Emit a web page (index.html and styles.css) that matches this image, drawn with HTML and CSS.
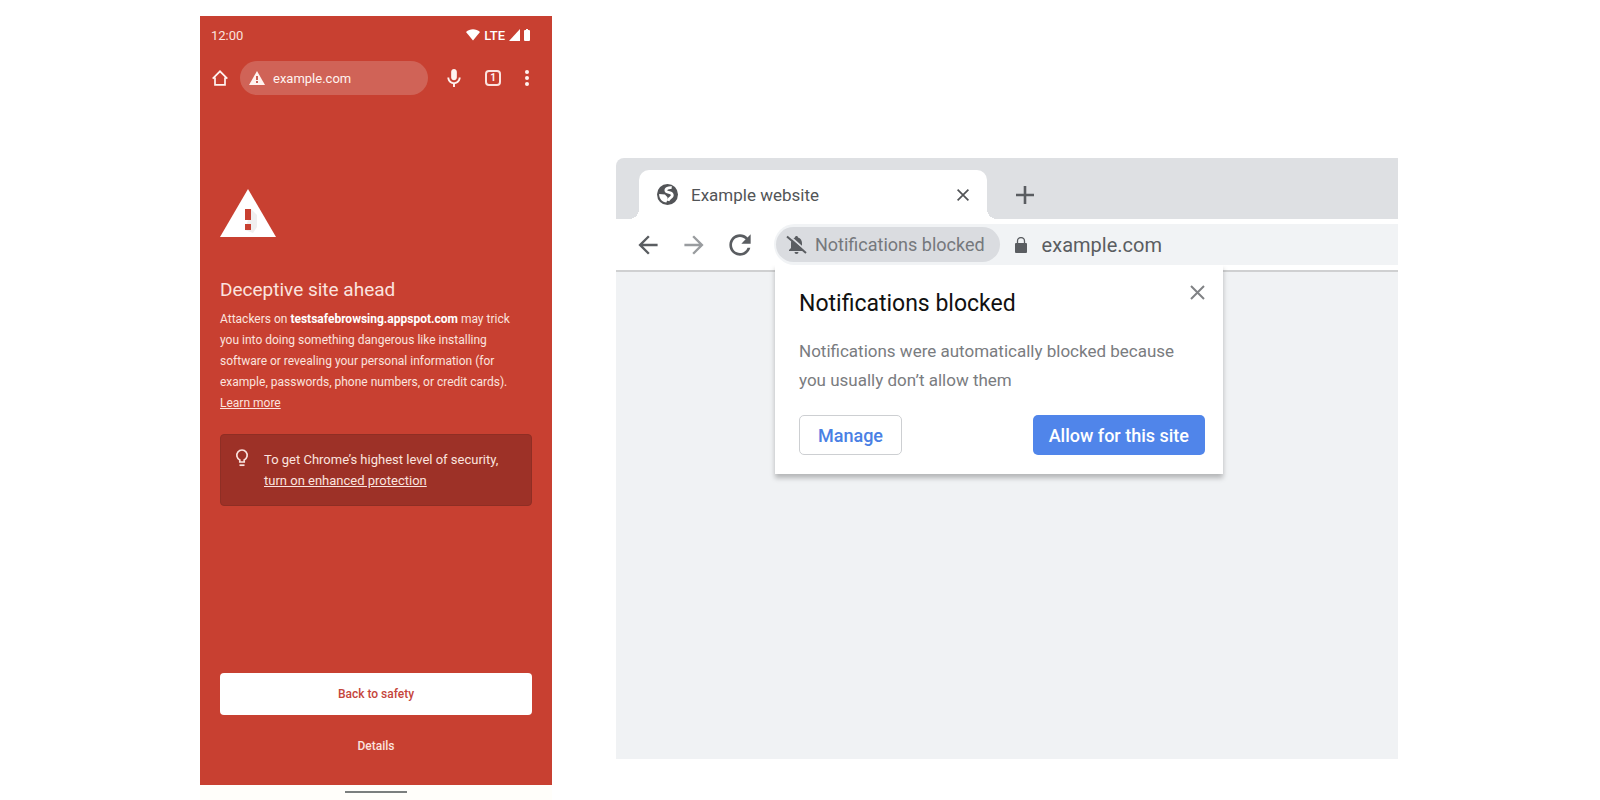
FILE: index.html
```html
<!DOCTYPE html>
<html lang="en">
<head>
    <meta charset="UTF-8">
    <meta name="viewport" content="width=device-width, initial-scale=1.0">
    <title>Example website</title>
    <link rel="stylesheet" href="styles.css">
</head>
<body>

<main class="stage">
    <!-- Phone -->
    <section class="phone">
        <div class="screen">
            <div class="status-bar">
                <span class="clock">12:00</span>
                <div class="status-icons">
                    <svg width="14" height="12" viewBox="0 0 14 12"><path d="M0 3C4-.6 10-.6 14 3L7 11.500z" fill="currentColor"/></svg>
                    <span>LTE</span>
                    <svg width="11" height="12" viewBox="0 0 11 12"><path d="M11 0v12H0z" fill="currentColor"/></svg>
                    <svg width="6" height="12" viewBox="0 0 6 12"><path d="M2 0h2v1h1a1 1 0 0 1 1 1v9a1 1 0 0 1-1 1H1a1 1 0 0 1-1-1V2a1 1 0 0 1 1-1h1z" fill="currentColor"/></svg>
                </div>
            </div>

            <div class="phone-toolbar">
                <button class="icon-button" aria-label="Home">
                    <svg width="16" height="16" viewBox="0 0 16 16"><path d="M.7 8.700 8 1.300l7.300 7.400M3 7.500V14.800H13V7.500" fill="none" stroke="currentColor" stroke-width="1.700"/></svg>
                </button>
                <div class="phone-url">
                    <svg width="16" height="14" viewBox="0 0 16 14"><path d="M8 0l8 14H0z" fill="currentColor"/><path d="M8 5v4M8 10v2" stroke="#cc5f54" stroke-width="2"/></svg>
                    <input type="text" aria-label="Address" value="example.com">
                </div>
                <button class="icon-button" aria-label="Voice search">
                    <svg width="14" height="18" viewBox="5 2 14 19"><path d="M12 14c1.660 0 3-1.340 3-3V5c0-1.660-1.340-3-3-3S9 3.340 9 5v6c0 1.660 1.340 3 3 3zM17 11c0 2.760-2.240 5-5 5s-5-2.240-5-5H5c0 3.530 2.610 6.430 6 6.920V21h2v-3.080c3.390-.490 6-3.390 6-6.920h-2z" fill="currentColor"/></svg>
                </button>
                <button class="tab-count" aria-label="Open tabs">1</button>
                <button class="icon-button" aria-label="Menu">
                    <svg width="4" height="16" viewBox="0 0 4 16"><g fill="currentColor"><circle cx="2" cy="2" r="2"/><circle cx="2" cy="8" r="2"/><circle cx="2" cy="14" r="2"/></g></svg>
                </button>
            </div>

            <div class="warning">
                <svg class="warning-icon" width="56" height="48" viewBox="0 0 56 48">
                    <path d="M28 0l28 48H0z" fill="#fff"/>
                    <path d="M31 20l6 6v12l-4 6-8-3z" fill="#f0efef"/>
                    <path d="M25 20h6v11h-6zM25 35h6v6h-6z" fill="#c84031"/>
                </svg>
                <h1>Deceptive site ahead</h1>
                <p>Attackers on <strong>testsafebrowsing.appspot.com</strong> may trick you into doing something dangerous like installing software or revealing your personal information (for example, passwords, phone numbers, or credit cards). <a href="#">Learn more</a></p>
                <div class="tip">
                    <svg width="14" height="18" viewBox="0 0 14 18"><path d="M4.800 13V10.900A5.200 5.200 0 1 1 9.200 10.900V13z" fill="none" stroke="currentColor" stroke-width="1.700"/><path d="M4.500 16.200h5" stroke="currentColor" stroke-width="1.700"/></svg>
                    <div>To get Chrome’s highest level of security, <a href="#">turn on enhanced protection</a></div>
                </div>
            </div>

            <div class="phone-actions">
                <button class="safety">Back to safety</button>
                <button class="details">Details</button>
            </div>
        </div>
        <div class="nav-bar"><span class="handle"></span></div>
    </section>

    <!-- Desktop browser -->
    <section class="browser">
        <div class="tab-strip">
            <div class="tab">
                <svg width="21" height="21" viewBox="0 0 20 20">
                    <circle cx="10" cy="10" r="10" fill="currentColor"/>
                    <path d="M2 9.500l5.500.5 2.500 2.500v2l-1 3C5 17.300 2 14 2 9.500z" fill="#fff"/>
                    <path d="M14 3.500C11 3 8 4.500 8.500 6.500c.5 2.500 5 .5 6 3.500.8 3-3 2.500-4 6" fill="none" stroke="#fff" stroke-width="2.600"/>
                </svg>
                <span class="tab-title">Example website</span>
                <button class="icon-button" aria-label="Close tab">
                    <svg width="12" height="12" viewBox="0 0 12 12"><path d="M.6.6l10.800 10.800M11.400.6L.6 11.400" stroke="currentColor" stroke-width="1.700"/></svg>
                </button>
            </div>
            <button class="icon-button new-tab" aria-label="New tab">
                <svg width="18" height="18" viewBox="0 0 18 18"><path d="M9 0v18M0 9h18" stroke="currentColor" stroke-width="2.600"/></svg>
            </button>
        </div>

        <div class="toolbar">
            <button class="icon-button" aria-label="Back">
                <svg width="24" height="24" viewBox="2 2 20 20"><path d="M20 11H7.830l5.590-5.590L12 4l-8 8 8 8 1.410-1.410L7.830 13H20v-2z" fill="currentColor"/></svg>
            </button>
            <button class="icon-button forward" aria-label="Forward">
                <svg width="24" height="24" viewBox="2 2 20 20"><path d="M12 4l-1.410 1.410L16.170 11H4v2h12.170l-5.580 5.590L12 20l8-8z" fill="currentColor"/></svg>
            </button>
            <button class="icon-button" aria-label="Reload">
                <svg width="24" height="24" viewBox="3 3 18 18"><path d="M17.650 6.350C16.200 4.900 14.210 4 12 4c-4.420 0-7.990 3.580-7.990 8s3.570 8 7.990 8c3.730 0 6.840-2.550 7.730-6h-2.080c-.820 2.330-3.040 4-5.650 4-3.310 0-6-2.690-6-6s2.690-6 6-6c1.660 0 3.140.690 4.220 1.780L13 11h7V4l-2.350 2.350z" fill="currentColor"/></svg>
            </button>
            <div class="omnibox">
                <button class="chip">
                    <svg width="21" height="20" viewBox="0 0 21 20">
                        <path d="M10.500 1c.9 0 1.500.6 1.500 1.500 2.500.8 4 3 4 5.500v5l2 2v1H3v-1l2-2V8c0-2.500 1.500-4.700 4-5.500C9 1.600 9.600 1 10.500 1zM8.500 17h4a2 2 0 0 1-4 0z" fill="currentColor"/>
                        <path d="M3 .5l18 16" stroke="#dadce0" stroke-width="2"/>
                        <path d="M1 1.500l19 16.500" stroke="currentColor" stroke-width="2"/>
                    </svg>
                    Notifications blocked
                </button>
                <svg class="lock" width="12" height="16" viewBox="0 0 12 16"><path d="M1 6H11A1 1 0 0 1 12 7V15A1 1 0 0 1 11 16H1A1 1 0 0 1 0 15V7A1 1 0 0 1 1 6z" fill="currentColor"/><path d="M2.500 7V4a3.500 3.500 0 0 1 7 0v3" fill="none" stroke="currentColor" stroke-width="1.300"/></svg>
                <input type="text" aria-label="Address" value="example.com">

                <div class="popup" role="dialog" aria-labelledby="popup-title">
                    <button class="icon-button popup-close" aria-label="Close">
                        <svg width="15" height="15" viewBox="0 0 15 15"><path d="M1 1l13 13M14 1L1 14" stroke="currentColor" stroke-width="2"/></svg>
                    </button>
                    <h2 id="popup-title">Notifications blocked</h2>
                    <p>Notifications were automatically blocked because you usually don’t allow them</p>
                    <div class="popup-actions">
                        <button class="manage">Manage</button>
                        <button class="allow">Allow for this site</button>
                    </div>
                </div>
            </div>
        </div>
        <div class="content"></div>
    </section>
</main>

</body>
</html>
```
FILE: styles.css
```css
* {
    box-sizing: border-box;
}
body {
    margin: 0;
    background-color: white;
    font-family: Roboto, "Liberation Sans", sans-serif;
}
button, input {
    font-family: inherit;
    border: none;
    background: none;
    padding: 0;
    margin: 0;
    color: inherit;
}
button {
    cursor: pointer;
}
svg {
    display: block;
    flex: none;
}
.icon-button {
    display: flex;
    align-items: center;
    justify-content: center;
    flex: none;
}
.stage {
    display: grid;
    grid-template-columns: 22vw 1fr;
    column-gap: 4vw;
    min-height: 100vh;
    padding: 0 12.6vw 0 12.5vw;
}

/* Phone */
.phone {
    display: flex;
    flex-direction: column;
    padding-top: 16px;
}
.screen {
    flex: 1;
    display: flex;
    flex-direction: column;
    background-color: #c84031;
    color: #fbe3df;
}
.status-bar {
    display: flex;
    justify-content: space-between;
    align-items: center;
    height: 38px;
    padding: 0 22px 0 11px;
    font-size: 13px;
}
.status-icons {
    display: flex;
    align-items: center;
    gap: 4px;
    color: white;
    font-weight: 500;
}
.phone-toolbar {
    display: flex;
    align-items: center;
    height: 48px;
    padding: 0 23px 0 12px;
    color: #fff3f0;
}
.phone-url {
    display: flex;
    align-items: center;
    gap: 8px;
    flex: 1;
    min-width: 0;
    height: 34px;
    margin: 0 19px 0 12px;
    padding: 0 9px;
    border-radius: 17px;
    background-color: #d06357;
}
.phone-url input {
    flex: 1;
    min-width: 0;
    font-size: 13px;
}
.tab-count {
    width: 16px;
    height: 16px;
    margin: 0 24px;
    border: 2px solid #fbe3df;
    border-radius: 4px;
    font-size: 10px;
    font-weight: bold;
    line-height: 12px;
}
.warning {
    padding: 87px 20px 0;
}
.warning h1 {
    margin: 41px 0 7px;
    font-size: 19px;
    font-weight: normal;
    line-height: 24px;
}
.warning p {
    margin: 0;
    padding-right: 10px;
    font-size: 12px;
    line-height: 21px;
}
.warning a {
    color: inherit;
}
.warning p a {
    display: block;
    width: max-content;
}
.warning strong {
    color: white;
}
.tip {
    display: flex;
    gap: 15px;
    margin-top: 20px;
    padding: 14px;
    border: 1px solid #8f2e24;
    border-radius: 4px;
    background-color: #9d3127;
    font-size: 13px;
    line-height: 21px;
}
.phone-actions {
    display: flex;
    flex-direction: column;
    gap: 10px;
    margin-top: auto;
    padding: 20px 20px 18px;
}
.phone-actions button {
    height: 42px;
    font-size: 12px;
    font-weight: 500;
}
.safety {
    border-radius: 4px;
    background-color: white;
    color: #c5453b;
}
.nav-bar {
    display: flex;
    justify-content: center;
    height: 15px;
    padding-top: 6px;
    background-color: #fffefa;
}
.handle {
    width: 62px;
    height: 2px;
    background-color: #7b7f7e;
}

/* Desktop browser */
.browser {
    display: flex;
    flex-direction: column;
    min-width: 0;
    padding: 158px 0 41px;
    color: #5a5d61;
}
.tab-strip {
    display: flex;
    align-items: flex-end;
    height: 61px;
    padding-left: 23px;
    border-top-left-radius: 8px;
    background-color: #dee0e3;
}
.tab {
    position: relative;
    display: flex;
    align-items: center;
    gap: 13px;
    width: 348px;
    height: 49px;
    padding: 0 18px;
    border-radius: 10px 10px 0 0;
    background-color: white;
    color: #525457;
}
.tab::before, .tab::after {
    content: "";
    position: absolute;
    bottom: 0;
    width: 10px;
    height: 10px;
}
.tab::before {
    right: 100%;
    background: radial-gradient(circle at 0 0, transparent 10px, white 10px);
}
.tab::after {
    left: 100%;
    background: radial-gradient(circle at 100% 0, transparent 10px, white 10px);
}
.tab-title {
    flex: 1;
    font-size: 17px;
}
.new-tab {
    height: 49px;
    margin-left: 29px;
}
.toolbar {
    display: flex;
    align-items: center;
    gap: 22px;
    height: 53px;
    padding-left: 20px;
    border-bottom: 2px solid #cfd0d1;
}
.forward {
    color: #999c9f;
}
.omnibox {
    position: relative;
    display: flex;
    align-items: center;
    flex: 1;
    min-width: 0;
    height: 41px;
    padding-left: 2px;
    border-radius: 21px 0 0 21px;
    background-color: #f1f3f5;
}
.omnibox input {
    flex: 1;
    min-width: 0;
    font-size: 20px;
}
.chip {
    display: flex;
    align-items: center;
    gap: 8px;
    height: 35px;
    padding: 0 15px 0 10px;
    border-radius: 18px;
    background-color: #dadce0;
    color: #75787c;
    font-size: 18px;
    white-space: nowrap;
}
.chip svg {
    color: #5a5d61;
}
.lock {
    margin: 0 15px;
}
.content {
    flex: 1;
    background-color: #f0f2f4;
}
.popup {
    position: absolute;
    top: 100%;
    left: 1px;
    width: 448px;
    padding: 20px 18px 19px 24px;
    background-color: white;
    box-shadow: 0 4px 5px rgba(0, 0, 0, 0.25);
    clip-path: inset(0 -8px -12px);
}
.popup-close {
    float: right;
    color: #808285;
}
.popup h2 {
    margin: 0 0 14px;
    color: #111;
    font-size: 23px;
    font-weight: normal;
    line-height: 38px;
}
.popup p {
    margin: 0 0 20px;
    color: #7a7c7f;
    font-size: 17px;
    line-height: 29px;
}
.popup-actions {
    display: flex;
    justify-content: space-between;
}
.popup-actions button {
    height: 40px;
    border-radius: 5px;
    font-size: 18px;
    font-weight: 500;
}
.popup-actions .manage {
    padding: 0 18px;
    border: 1px solid #cdcfd2;
    color: #4a80e4;
}
.popup-actions .allow {
    padding: 0 16px;
    background-color: #5085ea;
    color: white;
}
```
